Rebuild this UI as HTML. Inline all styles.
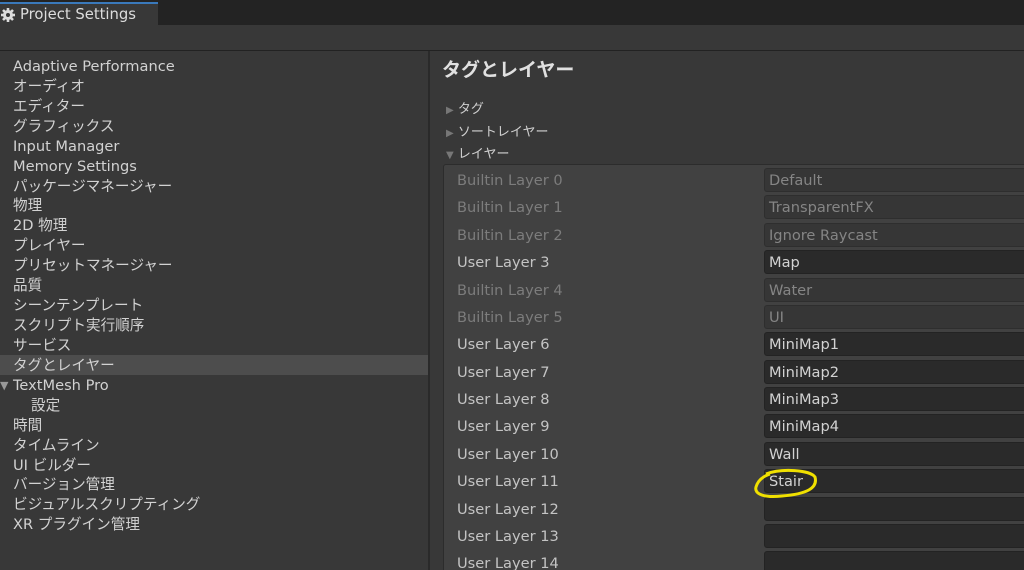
<!DOCTYPE html>
<html style="overflow:hidden;height:570px"><head><meta charset="utf-8"><style>
body{margin:0;width:1024px;height:570px;overflow:hidden;background:#383838;font-family:"DejaVu Sans","Noto Sans CJK JP",sans-serif;color:#c4c4c4;position:relative}
.top{position:absolute;left:0;top:0;width:1024px;height:25px;background:#232323}
.tab{position:absolute;left:0;top:2px;width:158px;height:23px;background:#383838;border-top:2px solid #3a79bb;box-sizing:border-box;font-size:14.8px;line-height:22px;color:#ddd;padding-left:20px}
.bar{position:absolute;left:0;top:50px;width:1024px;height:1px;background:#222}
.left{position:absolute;left:0;top:51px;width:428px;height:519px;background:#383838}
.sep{position:absolute;left:428px;top:51px;width:2px;height:519px;background:#2a2a2a}
.item{position:absolute;left:13px;font-size:14.6px;height:20px;line-height:22px;color:#d2d2d2}
.sel{position:absolute;left:0;top:355px;width:428px;height:20px;background:#4d4d4d}
h1{position:absolute;left:442px;top:55px;margin:0;font-size:19px;font-weight:bold;color:#e0e0e0}
.fo{position:absolute;left:446px;font-size:13px;color:#d0d0d0}
.box{position:absolute;left:443px;top:164px;width:600px;height:420px;background:#414141;border:1px solid #2c2c2c;border-radius:3px}
.lab{position:absolute;left:457px;font-size:14.6px;height:24px;line-height:27px}
.f{position:absolute;left:764px;width:280px;height:24px;background:#2a2a2a;border:1px solid #232323;border-radius:3px;box-sizing:border-box;font-size:14.6px;line-height:24px;padding-left:4px;color:#d2d2d2}
.dis{color:#7c7c7c}.f.dis{background:#363636;border-color:#2e2e2e;color:#858585}
</style></head><body>
<div class="top"></div>
<div class="tab"><svg style="position:absolute;left:1px;top:4px" width="14" height="14" viewBox="0 0 14 14"><circle cx="7" cy="7" r="5" fill="#ddd"/><g stroke="#ddd" stroke-width="2.6"><line x1="7" y1="0" x2="7" y2="14"/><line x1="0" y1="7" x2="14" y2="7"/><line x1="2" y1="2" x2="12" y2="12"/><line x1="12" y1="2" x2="2" y2="12"/></g><circle cx="7" cy="7" r="2" fill="#383838"/></svg>Project Settings</div>
<div class="bar"></div>
<div class="left"></div>
<div class="sel"></div>
<div class="sep"></div>
<div class="item" style="top:56px">Adaptive Performance</div>
<div class="item" style="top:76px">オーディオ</div>
<div class="item" style="top:96px">エディター</div>
<div class="item" style="top:116px">グラフィックス</div>
<div class="item" style="top:136px">Input Manager</div>
<div class="item" style="top:156px">Memory Settings</div>
<div class="item" style="top:176px">パッケージマネージャー</div>
<div class="item" style="top:195px">物理</div>
<div class="item" style="top:215px">2D 物理</div>
<div class="item" style="top:235px">プレイヤー</div>
<div class="item" style="top:255px">プリセットマネージャー</div>
<div class="item" style="top:275px">品質</div>
<div class="item" style="top:295px">シーンテンプレート</div>
<div class="item" style="top:315px">スクリプト実行順序</div>
<div class="item" style="top:335px">サービス</div>
<div class="item" style="top:355px">タグとレイヤー</div>
<div class="item" style="top:375px"><span style="position:absolute;left:-13px;font-size:11px;color:#999">▼</span>TextMesh Pro</div>
<div class="item" style="top:395px;left:31px">設定</div>
<div class="item" style="top:415px">時間</div>
<div class="item" style="top:435px">タイムライン</div>
<div class="item" style="top:455px">UI ビルダー</div>
<div class="item" style="top:474px">バージョン管理</div>
<div class="item" style="top:494px">ビジュアルスクリプティング</div>
<div class="item" style="top:514px">XR プラグイン管理</div>
<h1>タグとレイヤー</h1>
<div class="fo" style="top:98px"><span style="color:#777;font-size:10px">▶</span> タグ</div>
<div class="fo" style="top:121px"><span style="color:#777;font-size:10px">▶</span> ソートレイヤー</div>
<div class="fo" style="top:143px"><span style="color:#777;font-size:10px">▼</span> レイヤー</div>
<div class="box"></div>
<div class="lab dis" style="top:167px">Builtin Layer 0</div><div class="f dis" style="top:168px">Default</div>
<div class="lab dis" style="top:194px">Builtin Layer 1</div><div class="f dis" style="top:195px">TransparentFX</div>
<div class="lab dis" style="top:222px">Builtin Layer 2</div><div class="f dis" style="top:223px">Ignore Raycast</div>
<div class="lab" style="top:249px">User Layer 3</div><div class="f" style="top:250px">Map</div>
<div class="lab dis" style="top:277px">Builtin Layer 4</div><div class="f dis" style="top:278px">Water</div>
<div class="lab dis" style="top:304px">Builtin Layer 5</div><div class="f dis" style="top:305px">UI</div>
<div class="lab" style="top:331px">User Layer 6</div><div class="f" style="top:332px">MiniMap1</div>
<div class="lab" style="top:359px">User Layer 7</div><div class="f" style="top:360px">MiniMap2</div>
<div class="lab" style="top:386px">User Layer 8</div><div class="f" style="top:387px">MiniMap3</div>
<div class="lab" style="top:413px">User Layer 9</div><div class="f" style="top:414px">MiniMap4</div>
<div class="lab" style="top:441px">User Layer 10</div><div class="f" style="top:442px">Wall</div>
<div class="lab" style="top:468px">User Layer 11</div><div class="f" style="top:469px">Stair</div>
<div class="lab" style="top:496px">User Layer 12</div><div class="f" style="top:497px"></div>
<div class="lab" style="top:523px">User Layer 13</div><div class="f" style="top:524px"></div>
<div class="lab" style="top:550px">User Layer 14</div><div class="f" style="top:551px"></div>
<svg style="position:absolute;left:752px;top:468px" width="66" height="32"><path d="M14 6 C30 0 58 2 63 9 C66 20 55 26 30 28 C12 30 2 26 4 19 C6 12 12 8 18 6" fill="none" stroke="#f0e000" stroke-width="3"/></svg>
</body></html>
